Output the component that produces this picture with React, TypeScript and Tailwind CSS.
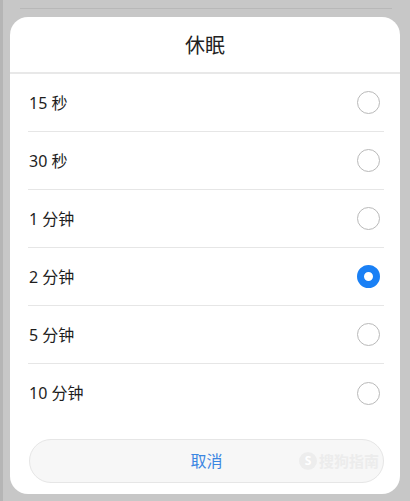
import React from "react";

const items = ["15 秒", "30 秒", "1 分钟", "2 分钟", "5 分钟", "10 分钟"];
const selected = 3;

export default function App() {
  return (
    <div
      className="w-[410px] h-[501px] bg-[#c7c7c7] overflow-hidden relative"
      style={{ fontFamily: '"Noto Sans", "Noto Sans CJK SC", sans-serif' }}
    >
      <div className="absolute left-[20px] right-[18px] top-[8px] h-px bg-[#b8b8b8]" />
      <div className="absolute left-0 top-0 w-[3px] h-full bg-[#b5b5b5]" />
      <div className="relative mx-[10px] mt-[17px] h-[477px] rounded-[18px] bg-white flex flex-col">
        <div className="h-[55px] flex items-center justify-center text-[20px] text-[#222] pt-[3px]">
          休眠
        </div>
        <div className="h-[2px] bg-[#e8e8e8]" />
        <div className="ml-[18px] mr-[16px] flex flex-col">
          {items.map((t, i) => (
            <div
              key={t}
              className={`h-[58px] flex items-center justify-between pl-[1px] pr-[4px] ${
                i < items.length - 1 ? "border-b border-[#e6e6e6]" : ""
              }`}
            >
              <span className="text-[16px] text-[#1e1e1e]">{t}</span>
              {i === selected ? (
                <span className="w-[23px] h-[23px] rounded-full border-[7px] border-[#1a80f5] bg-white" />
              ) : (
                <span className="w-[23px] h-[23px] rounded-full border border-[#b9b9b9] bg-white" />
              )}
            </div>
          ))}
        </div>
        <div className="ml-[19px] mr-[16px] mt-[17px] h-[44px] rounded-full bg-[#f7f7f7] border border-[#e6e6e6] flex items-center justify-center relative">
          <span className="text-[16px] text-[#3b86e2]">取消</span>
          <span className="absolute right-[4px] top-[10px] flex items-center gap-[2px] text-[15px] font-bold text-[#ececec]">
            <span className="w-[18px] h-[18px] rounded-full bg-[#ededed] text-white text-[12px] flex items-center justify-center">S</span>
            搜狗指南
          </span>
        </div>
      </div>
    </div>
  );
}
